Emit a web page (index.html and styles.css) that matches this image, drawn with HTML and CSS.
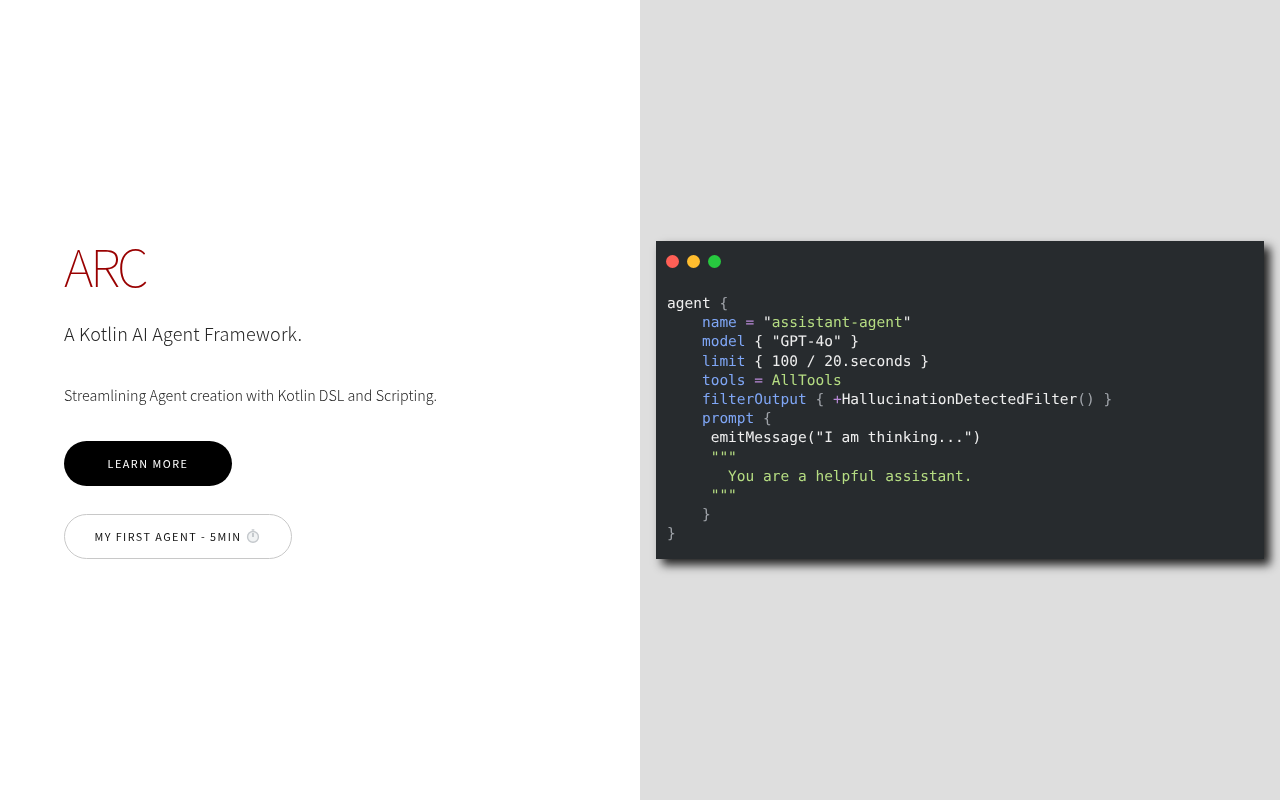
FILE: index.html
```html
<!DOCTYPE html>
<html lang="en">
<head>
<meta charset="utf-8">
<title>ARC</title>
<link rel="stylesheet" href="styles.css">
</head>
<body>
<main class="split">
  <section class="intro">
    <div class="intro-inner">
      <h1 class="title">ARC</h1>
      <p class="tagline">A Kotlin AI Agent Framework.</p>
      <p class="desc">Streamlining Agent creation with Kotlin DSL and Scripting.</p>
      <div class="actions">
        <a class="btn btn-primary">Learn More</a>
        <a class="btn btn-outline">My First Agent - 5min
          <svg class="watch" viewBox="0 0 16 16" width="14" height="14" aria-hidden="true">
            <rect x="6.5" y="0.3" width="3" height="1.6" fill="#c4c8cc"/>
            <circle cx="8" cy="9" r="6.2" fill="#f1f3f4" stroke="#c4c8cc" stroke-width="1.6"/>
            <path d="M8 9V4.6" stroke="#a4aab0" stroke-width="1.3"/>
          </svg>
        </a>
      </div>
    </div>
  </section>
  <section class="showcase">
    <div class="window">
      <div class="dots"><span class="dot red"></span><span class="dot amber"></span><span class="dot green"></span></div>
<pre class="code">agent <span class="p">{</span>
    <span class="k">name</span> <span class="o">=</span> "<span class="s">assistant-agent</span>"
    <span class="k">model</span> { "GPT-4o" }
    <span class="k">limit</span> { 100 / 20.seconds }
    <span class="k">tools</span> <span class="o">=</span> <span class="s">AllTools</span>
    <span class="k">filterOutput</span> <span class="p">{</span> <span class="o">+</span>HallucinationDetectedFilter<span class="p">() }</span>
    <span class="k">prompt</span> <span class="p">{</span>
     emitMessage("I am thinking...")
     <span class="s">"""</span>
       <span class="s">You are a helpful assistant.</span>
     <span class="s">"""</span>
    <span class="p">}</span>
<span class="p">}</span></pre>
    </div>
  </section>
</main>
</body>
</html>
```
FILE: styles.css
```css
* { box-sizing: border-box; }
html, body { margin: 0; height: 100%; }
body { font-family: "Noto Sans CJK SC", "Lato", sans-serif; font-weight: 300; color: #111; background: #fff; }
.split { display: grid; grid-template-columns: 1fr 1fr; height: 800px; }
.intro { display: flex; align-items: center; padding: 0 64px; background: #fff; }
.intro-inner { display: flex; flex-direction: column; align-items: flex-start; will-change: transform; }
.title { margin: 0 0 28px; font-size: 51px; line-height: 48px; font-weight: 100; color: #990000; letter-spacing: -3.1px; }
.tagline { margin: 0 0 34px; font-size: 18px; line-height: 32px; letter-spacing: 0.18px; color: #262626; }
.desc { margin: 0 0 34px; font-size: 14.35px; line-height: 24px; color: #262626; }
.actions { display: flex; flex-direction: column; align-items: flex-start; gap: 28px; }
.btn { display: flex; align-items: center; justify-content: center; height: 45px; padding-bottom: 1px; border-radius: 23px; font-size: 10.8px; font-weight: 400; letter-spacing: 1.5px; text-transform: uppercase; }
.btn-primary { width: 168px; background: #000; color: #fff; }
.btn-outline { width: 228px; gap: 4px; padding-right: 2px; letter-spacing: 1.45px; background: #fff; color: #111; border: 1px solid #c8c8c8; }
.watch { flex: none; }
.showcase { display: flex; align-items: center; padding: 0 16px; background: #dedede; }
.window { width: 100%; height: 318px; background: #272b2e; box-shadow: 6px 6px 9px rgba(0,0,0,.85); padding: 14px 10px 0 10px; }
.dots { display: flex; gap: 8px; }
.dot { width: 13px; height: 13px; border-radius: 50%; }
.red { background: #ff5f56; }
.amber { background: #ffbd2e; }
.green { background: #27c93f; }
.code { margin: 27.4px 0 0 1.4px; font-family: "DejaVu Sans Mono", monospace; font-size: 14.5px; font-weight: 400; line-height: 19.2px; color: #eeeeee; text-rendering: geometricPrecision; will-change: transform; }
.k { color: #7fa6f5; }
.o { color: #b98ad8; }
.s { color: #b5dc82; }
.p { color: #a0a4aa; }
```
